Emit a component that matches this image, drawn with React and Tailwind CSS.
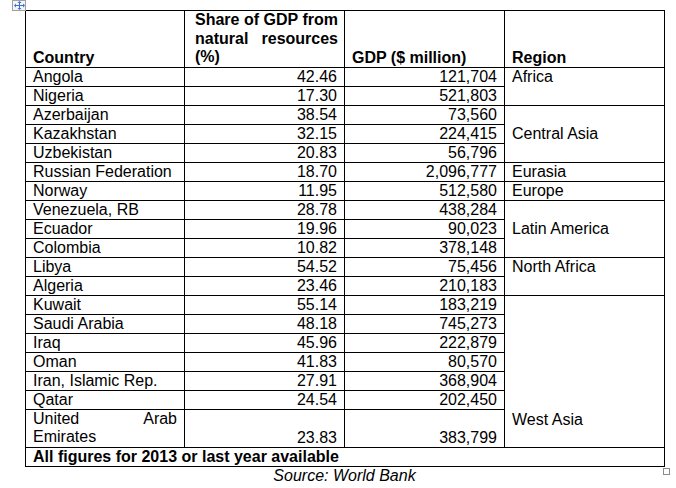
import React from 'react'

const rows = [
  ['Angola', '42.46', '121,704'],
  ['Nigeria', '17.30', '521,803'],
  ['Azerbaijan', '38.54', '73,560'],
  ['Kazakhstan', '32.15', '224,415'],
  ['Uzbekistan', '20.83', '56,796'],
  ['Russian Federation', '18.70', '2,096,777'],
  ['Norway', '11.95', '512,580'],
  ['Venezuela, RB', '28.78', '438,284'],
  ['Ecuador', '19.96', '90,023'],
  ['Colombia', '10.82', '378,148'],
  ['Libya', '54.52', '75,456'],
  ['Algeria', '23.46', '210,183'],
  ['Kuwait', '55.14', '183,219'],
  ['Saudi Arabia', '48.18', '745,273'],
  ['Iraq', '45.96', '222,879'],
  ['Oman', '41.83', '80,570'],
  ['Iran, Islamic Rep.', '27.91', '368,904'],
  ['Qatar', '24.54', '202,450'],
  ['United Arab Emirates', '23.83', '383,799'],
]

// region cells keyed by the row they start on
const regions = {
  0: { name: 'Africa', span: 2, cls: 'align-top' },
  2: { name: 'Central Asia', span: 3, cls: 'align-middle' },
  5: { name: 'Eurasia', span: 1, cls: 'align-middle' },
  6: { name: 'Europe', span: 1, cls: 'align-middle' },
  7: { name: 'Latin America', span: 3, cls: 'align-middle' },
  10: { name: 'North Africa', span: 2, cls: 'align-top' },
  12: { name: 'West Asia', span: 7, cls: 'align-bottom pb-[18px]' },
}

const cell = 'border border-black px-[7px] py-0'

function MoveIcon() {
  return (
    <div className="absolute left-[12px] top-0 w-[14px] h-[11px] border border-[#a0a0a0] bg-[#f4f4f4] flex items-center justify-center">
      <svg width="11" height="9" viewBox="0 0 11 9" fill="#3b6fd8">
        <rect x="5" y="1" width="1" height="7" />
        <rect x="1" y="4" width="9" height="1" />
        <path d="M5.5 0 L7.5 2 L3.5 2 Z" />
        <path d="M5.5 9 L7.5 7 L3.5 7 Z" />
        <path d="M0 4.5 L2 2.5 L2 6.5 Z" />
        <path d="M11 4.5 L9 2.5 L9 6.5 Z" />
      </svg>
    </div>
  )
}

export default function App() {
  return (
    <div className="relative w-[676px] h-[488px] bg-white text-black font-['Liberation_Sans',Arial,sans-serif] text-[16px] leading-[18px]">
      <MoveIcon />
      <div className="pt-[10px] pl-[25px] w-[664px]">
        <table className="w-[639px] table-fixed border-collapse">
          <colgroup>
            <col className="w-[159px]" />
            <col className="w-[160px]" />
            <col className="w-[160px]" />
            <col className="w-[160px]" />
          </colgroup>
          <thead>
            <tr className="font-bold">
              <td className={`${cell} align-bottom text-left`}>Country</td>
              <td className={`${cell} pl-[10px] pr-[6px] align-bottom text-justify leading-[18.67px]`}>
                Share of GDP from natural resources (%)
              </td>
              <td className={`${cell} align-bottom`}>GDP ($ million)</td>
              <td className={`${cell} align-bottom`}>Region</td>
            </tr>
          </thead>
          <tbody>
            {rows.map((r, i) => {
              const last = i === rows.length - 1
              const reg = regions[i]
              return (
                <tr key={r[0]}>
                  <td className={`${cell} ${last ? 'text-justify align-top pb-[1px]' : ''}`}>{r[0]}</td>
                  <td className={`${cell} text-right ${last ? 'align-bottom' : ''}`}>{r[1]}</td>
                  <td className={`${cell} text-right ${last ? 'align-bottom' : ''}`}>{r[2]}</td>
                  {reg && (
                    <td rowSpan={reg.span} className={`${cell} ${reg.cls}`}>
                      {reg.name}
                    </td>
                  )}
                </tr>
              )
            })}
            <tr>
              <td colSpan={4} className={`${cell} font-bold`}>
                All figures for 2013 or last year available
              </td>
            </tr>
          </tbody>
        </table>
        <p className="w-[639px] text-center italic">Source: World Bank</p>
      </div>
      <div className="absolute left-[663px] top-[468px] w-[7px] h-[7px] border border-[#8a8a8a] bg-white" />
    </div>
  )
}
